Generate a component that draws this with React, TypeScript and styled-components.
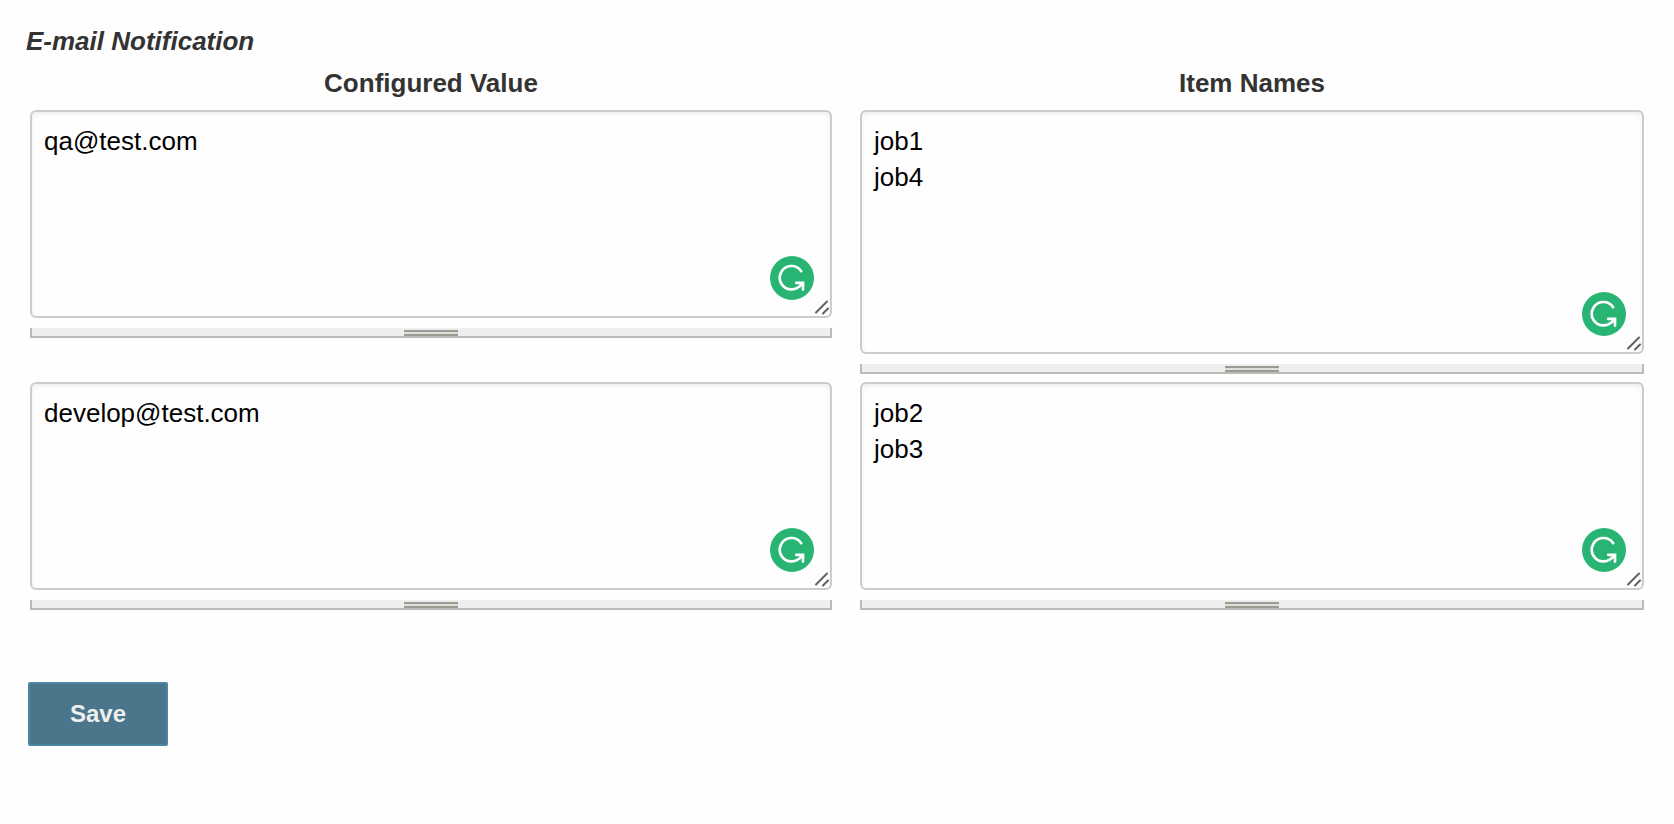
import React from "react";
import styled, { createGlobalStyle } from "styled-components";

const GlobalStyle = createGlobalStyle`
  body {
    margin: 0;
    background: #fefefe;
    color: #333;
    font: 26px/36px "Liberation Sans", Arial, sans-serif;
  }
`;

const Page = styled.form`
  padding: 23px 16px;
`;

const Title = styled.h2`
  margin: 0 0 6px 10px;
  font-size: inherit;
  font-style: italic;
  font-weight: bold;
`;

const Table = styled.table`
  width: 100%;
  table-layout: fixed;
  border-collapse: collapse;
`;

const HeaderCell = styled.th<{ $width?: string }>`
  box-sizing: border-box;
  width: ${({ $width }) => $width ?? "auto"};
  padding: 0 14px 9px;
  font-weight: bold;
  text-align: center;
`;

const Cell = styled.td`
  padding: 0 14px 8px;
  vertical-align: top;
`;

const Editor = styled.div`
  position: relative;
`;

const TextArea = styled.textarea<{ $height: number }>`
  display: block;
  box-sizing: border-box;
  width: 100%;
  height: ${({ $height }) => $height}px;
  margin: 0;
  padding: 11px 12px;
  border: 2px solid #ccc;
  border-radius: 6px;
  outline: none;
  background: #fefefe;
  box-shadow: inset 0 2px 4px rgba(0, 0, 0, 0.075);
  color: #000;
  font: inherit;
  resize: none;
`;

const CheckerButton = styled.button`
  position: absolute;
  right: 18px;
  bottom: 18px;
  width: 44px;
  height: 44px;
  padding: 0;
  border: 0;
  border-radius: 50%;
  background: #28b473;
  cursor: pointer;

  svg {
    display: block;
  }
`;

const Corner = styled.svg`
  position: absolute;
  right: 2px;
  bottom: 2px;
  pointer-events: none;
`;

const ResizeBar = styled.div`
  display: flex;
  justify-content: center;
  box-sizing: border-box;
  height: 10px;
  margin-top: 10px;
  padding-top: 2px;
  border: solid #bbbbb5;
  border-width: 0 2px 2px;
  background: #eee;
  cursor: s-resize;
`;

const Grip = styled.span`
  box-sizing: border-box;
  width: 54px;
  height: 6px;
  border: solid #999c92;
  border-width: 2px 0;
  background: #dde0d8;
`;

const SaveButton = styled.button`
  display: block;
  margin: 64px 12px 0;
  padding: 12px 40px;
  border: 2px solid #4b87a3;
  border-radius: 2px;
  background: #4b758b;
  color: #eee;
  font: bold 24px/36px "Liberation Sans", Arial, sans-serif;
  cursor: pointer;
`;

interface FieldProps {
  label: string;
  value: string;
  height: number;
}

function Field({ label, value, height }: FieldProps) {
  return (
    <>
      <Editor>
        <TextArea aria-label={label} defaultValue={value} spellCheck={false} $height={height} />
        <CheckerButton type="button" aria-label="Check writing">
          <svg
            width="44"
            height="44"
            viewBox="0 0 44 44"
            fill="none"
            stroke="#fff"
            strokeWidth="2.7"
            strokeLinecap="round"
          >
            <path d="M31.2 15.2A11.7 11.7 0 1 0 21.8 33.4C26.500 33.4 29.500 31.200 32 27.800" />
            <path d="M26.200 26.800H33V33.600" />
          </svg>
        </CheckerButton>
        <Corner
          width="18"
          height="18"
          viewBox="0 0 18 18"
          stroke="#606060"
          strokeWidth="2"
          strokeLinecap="round"
          aria-hidden="true"
        >
          <path d="M4 14.500L15 3.500M11 15.500L16 10.500" />
        </Corner>
      </Editor>
      <ResizeBar>
        <Grip />
      </ResizeBar>
    </>
  );
}

const rows = [
  { value: "qa@test.com", names: "job1\njob4", namesHeight: 244 },
  { value: "develop@test.com", names: "job2\njob3", namesHeight: 208 },
];

export default function App() {
  return (
    <>
      <GlobalStyle />
      <Page onSubmit={(event) => event.preventDefault()}>
        <Title>E-mail Notification</Title>
        <Table>
          <thead>
            <tr>
              <HeaderCell scope="col" $width="50.55%">Configured Value</HeaderCell>
              <HeaderCell scope="col">Item Names</HeaderCell>
            </tr>
          </thead>
          <tbody>
            {rows.map((row) => (
              <tr key={row.value}>
                <Cell>
                  <Field label="Configured Value" value={row.value} height={208} />
                </Cell>
                <Cell>
                  <Field label="Item Names" value={row.names} height={row.namesHeight} />
                </Cell>
              </tr>
            ))}
          </tbody>
        </Table>
        <SaveButton type="submit">Save</SaveButton>
      </Page>
    </>
  );
}
